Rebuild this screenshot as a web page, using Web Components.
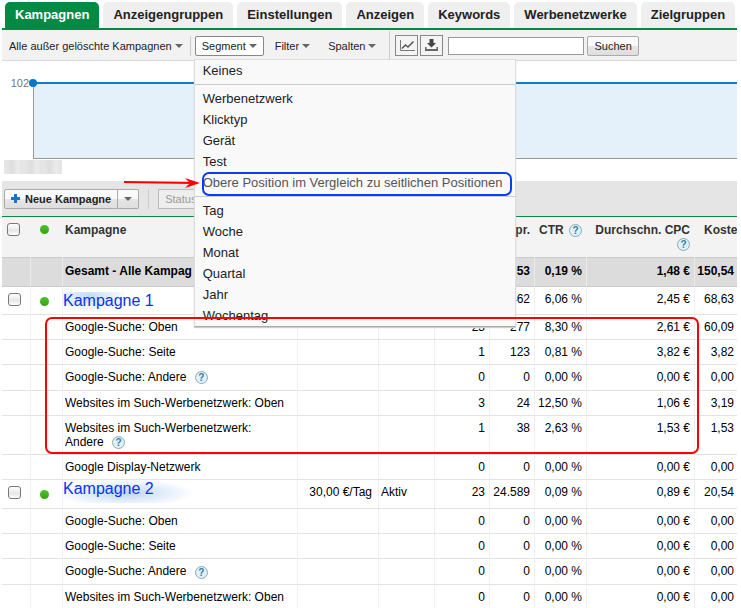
<!DOCTYPE html>
<html lang="de">
<head>
<meta charset="utf-8">
<title>Kampagnen</title>
<style>
  html {
    overflow: hidden;
  }
  body {
    margin: 0;
    padding: 2px 4px 0 2px;
    background: #fff;
    color: #000;
    font-family: "Liberation Sans", Arial, Helvetica, sans-serif;
    font-size: 12px;
  }
</style>
</head>
<body>
<tab-bar>
  <tab-item active>Kampagnen</tab-item>
  <tab-item>Anzeigengruppen</tab-item>
  <tab-item>Einstellungen</tab-item>
  <tab-item>Anzeigen</tab-item>
  <tab-item>Keywords</tab-item>
  <tab-item>Werbenetzwerke</tab-item>
  <tab-item>Zielgruppen</tab-item>
</tab-bar>
<tool-bar>
  <segment-menu slot="menu"></segment-menu>
</tool-bar>
<click-chart>102</click-chart>
<action-bar></action-bar>
<campaign-table></campaign-table>

<script>
class TabBar extends HTMLElement {
    constructor() {
        super()
        this.shadowDOM = this.attachShadow({mode: 'open'})
        this.shadowDOM.innerHTML = `
      <style>
        :host {
            display: block;
            border-bottom: 2px solid #008a43;
        }
        nav {
            display: flex;
            gap: 4px;
            padding-left: 3px;
        }
      </style>
      <nav><slot></slot></nav>
`
    }
}

class TabItem extends HTMLElement {
    constructor() {
        super()
        this.shadowDOM = this.attachShadow({mode: 'open'})
        this.shadowDOM.innerHTML = `
      <style>
        :host {
            display: block;
            background: #efefef;
            border-radius: 5px 5px 0 0;
        }
        a {
            display: block;
            padding: 0 10px;
            color: #222;
            font-size: 13px;
            font-weight: bold;
            line-height: 26px;
            text-decoration: none;
            white-space: nowrap;
        }
        :host([active]) {
            background: #008a43;
        }
        :host([active]) a {
            color: #fff;
        }
      </style>
      <a href="#"><slot></slot></a>
`
    }
}

class ToolBar extends HTMLElement {
    constructor() {
        super()
        this.shadowDOM = this.attachShadow({mode: 'open'})
        this.shadowDOM.innerHTML = `
      <style>
        * {
            box-sizing: border-box;
        }
        :host {
            display: flex;
            align-items: center;
            height: 31px;
            padding-top: 1px;
            box-sizing: border-box;
            background: #f2f2f2;
            border-bottom: 1px solid #d8d8d8;
        }
        button {
            display: flex;
            align-items: center;
            gap: 3px;
            height: 20px;
            margin: 0;
            padding: 0 6px;
            border: 1px solid transparent;
            background: none;
            color: #222;
            font: 11px "Liberation Sans", Arial, sans-serif;
            white-space: nowrap;
        }
        .arrow::after {
            content: "";
            border: 4px solid transparent;
            border-top-color: #666;
            border-bottom: 0;
        }
        .segment {
            position: relative;
            margin: 0 4px;
        }
        .segment > button {
            border-color: #888;
            border-radius: 2px;
            background: #fff;
        }
        .line {
            width: 1px;
            height: 20px;
            background: #ccc;
        }
        .line.tall {
            height: 29px;
            margin: 0 5px 0 6px;
        }
        .filter {
            margin-right: 4px;
        }
        .icon {
            justify-content: center;
            width: 23px;
            height: 21px;
            margin-right: 2px;
            padding: 0;
            border-color: #888;
            background: #f4f4f4;
        }
        input {
            width: 136px;
            height: 18px;
            margin: 0 3px;
            padding: 0 3px;
            border: 1px solid #999;
            background: #fff;
            font-size: 11px;
        }
        .search {
            border-color: #aaa;
            border-radius: 2px;
            background: linear-gradient(#fafafa 50%, #e6e6e6 50%, #dedede);
        }
      </style>
      <button class="arrow">Alle außer gelöschte Kampagnen</button>
      <span class="line"></span>
      <div class="segment">
        <button class="arrow">Segment</button>
        <slot name="menu"></slot>
      </div>
      <button class="arrow filter">Filter</button>
      <button class="arrow">Spalten</button>
      <span class="line tall"></span>
      <button class="icon" aria-label="Diagramm">
        <svg width="16" height="13" viewBox="0 0 16 13" fill="none">
          <path d="M1.500 1v10.500H16" stroke="#777"/>
          <path d="M3 9.500L6.500 6L9 8L14.500 2.500" stroke="#555" stroke-width="1.500"/>
        </svg>
      </button>
      <button class="icon" aria-label="Herunterladen">
        <svg width="15" height="13" viewBox="0 0 15 13">
          <path d="M5.500 0h4v4h2.500L7.500 8.500L3 4h2.500z" fill="#444"/>
          <path d="M1 8v4h13V8h-1.500v2h-10V8z" fill="#666"/>
        </svg>
      </button>
      <input type="text" aria-label="Suche">
      <button class="search">Suchen</button>
`
    }
}

class SegmentMenu extends HTMLElement {
    constructor() {
        super()
        this.shadowDOM = this.attachShadow({mode: 'open'})
    }

    connectedCallback() {
        this.groups = [
            ['Keines'],
            ['Werbenetzwerk', 'Klicktyp', 'Gerät', 'Test', 'Obere Position im Vergleich zu seitlichen Positionen'],
            ['Tag', 'Woche', 'Monat', 'Quartal', 'Jahr', 'Wochentag']
        ]
        this.render()
    }

    render() {
        this.shadowDOM.innerHTML = `
      <style>
        :host {
            position: absolute;
            z-index: 10;
            top: 23px;
            left: -1px;
            box-sizing: border-box;
            width: 322px;
            border: 1px solid #ddd;
            border-bottom-color: #aaa;
            background: #f9f9f9;
            box-shadow: 0 1px 1px #ccc;
        }
        ul {
            margin: 0;
            padding: 3px 0;
            list-style: none;
        }
        ul:first-of-type {
            padding-top: 0;
        }
        ul:last-of-type {
            padding-bottom: 0;
        }
        ul + ul {
            border-top: 1px solid #ccc;
        }
        li {
            padding-left: 8px;
            color: #222;
            font-size: 13px;
            line-height: 21px;
            white-space: nowrap;
        }
        .marked {
            position: relative;
            color: #555;
        }
        .marked::after {
            content: "";
            position: absolute;
            inset: 0 3px -3px 7px;
            border: 2px solid #0a3cf5;
            border-radius: 7px;
        }
        svg {
            position: absolute;
            top: 5px;
            left: -71px;
        }
      </style>
      ${this.groups.map(items => `<ul>${items.map(item => this.item(item)).join('')}</ul>`).join('')}
`
    }

    item(text) {
        if (!text.startsWith('Obere')) {
            return `<li>${text}</li>`
        }
        return `<li class="marked">${text}
          <svg width="77" height="12" viewBox="0 0 77 12">
            <path d="M0 5L70 6" stroke="#f00" stroke-width="2"/>
            <path d="M76 6L61 1L66 6L61 11z" fill="#f00"/>
          </svg></li>`
    }
}

class ClickChart extends HTMLElement {
    constructor() {
        super()
        this.shadowDOM = this.attachShadow({mode: 'open'})
        this.shadowDOM.innerHTML = `
      <style>
        :host {
            display: grid;
            grid-template-columns: 27px 1fr;
            column-gap: 4px;
            padding: 21px 0 7px;
        }
        .label {
            color: #777;
            font-size: 11px;
            line-height: 2px;
            text-align: right;
        }
        .plot {
            position: relative;
            height: 74px;
            border-top: 2px solid #1579cb;
            border-left: 1px solid #999;
            border-bottom: 1px solid #999;
            background: #e4f1fa;
        }
        .plot::before {
            content: "";
            position: absolute;
            top: -5px;
            left: -5px;
            width: 8px;
            height: 8px;
            border-radius: 4px;
            background: #0b73cc;
        }
        .date {
            grid-column: 1 / -1;
            width: 58px;
            height: 14px;
            margin: 1px 0 0 2px;
            background: repeating-linear-gradient(90deg, #e8e8e8 0, #dedede 8px, #ebebeb 14px, #e2e2e2 19px);
        }
      </style>
      <div class="label"><slot></slot></div>
      <div class="plot"></div>
      <div class="date"></div>
`
    }
}

class ActionBar extends HTMLElement {
    constructor() {
        super()
        this.shadowDOM = this.attachShadow({mode: 'open'})
        this.shadowDOM.innerHTML = `
      <style>
        :host {
            display: flex;
            align-items: center;
            gap: 9px;
            height: 35px;
            padding-left: 2px;
            background: #e5e5e5;
            border-bottom: 1px solid #0b8a43;
        }
        .split {
            display: flex;
        }
        button {
            display: flex;
            align-items: center;
            box-sizing: border-box;
            height: 20px;
            margin: 0;
            padding: 0 6px;
            border: 1px solid #aaa;
            background: linear-gradient(#fafafa 50%, #e6e6e6 50%, #dedede);
            color: #222;
            font: bold 11px "Liberation Sans", Arial, sans-serif;
        }
        .new {
            gap: 5px;
            border-radius: 2px 0 0 2px;
        }
        .more {
            border-left: 0;
            border-radius: 0 2px 2px 0;
        }
        .more::after {
            content: "";
            border: 4px solid transparent;
            border-top-color: #666;
            border-bottom: 0;
        }
        .line {
            width: 1px;
            height: 20px;
            background: #ccc;
        }
        .status {
            width: 90px;
            background: #eee;
            border-color: #bbb;
            color: #999;
            font-weight: normal;
        }
      </style>
      <div class="split">
        <button class="new">
          <svg width="9" height="9" viewBox="0 0 9 9"><path d="M3 0h3v3h3v3H6v3H3V6H0V3h3z" fill="#1a73c9"/></svg>
          Neue Kampagne
        </button>
        <button class="more" aria-label="Weitere"></button>
      </div>
      <span class="line"></span>
      <button class="status" disabled>Status</button>
`
    }
}

class HelpIcon extends HTMLElement {
    constructor() {
        super()
        this.shadowDOM = this.attachShadow({mode: 'open'})
        this.shadowDOM.innerHTML = `
      <style>
        :host {
            display: inline-block;
            vertical-align: middle;
            margin-left: 2px;
        }
        button {
            display: block;
            box-sizing: border-box;
            width: 13px;
            height: 13px;
            padding: 0;
            border: 1px solid #8aacb4;
            border-radius: 7px;
            background: #dff0f7;
            color: #3a7ca8;
            font: bold 10px/11px "Liberation Sans", Arial, sans-serif;
            text-align: center;
        }
      </style>
      <button>?</button>
`
    }
}

class CampaignTable extends HTMLElement {
    constructor() {
        super()
        this.shadowDOM = this.attachShadow({mode: 'open'})
    }

    connectedCallback() {
        const help = ' <help-icon></help-icon>'
        // name, budget, status, clicks, impressions, ctr, cpc, cost
        this.rows = [
            {css: 'campaign first', cells: ['Kampagne 1', '', '', '28', '462', '6,06 %', '2,45 €', '68,63']},
            {cells: ['Google-Suche: Oben', '', '', '23', '277', '8,30 %', '2,61 €', '60,09']},
            {cells: ['Google-Suche: Seite', '', '', '1', '123', '0,81 %', '3,82 €', '3,82']},
            {css: 'help', cells: ['Google-Suche: Andere' + help, '', '', '0', '0', '0,00 %', '0,00 €', '0,00']},
            {cells: ['Websites im Such-Werbenetzwerk: Oben', '', '', '3', '24', '12,50 %', '1,06 €', '3,19']},
            {cells: ['Websites im Such-Werbenetzwerk:<br>Andere' + help, '', '', '1', '38', '2,63 %', '1,53 €', '1,53']},
            {cells: ['Google Display-Netzwerk', '', '', '0', '0', '0,00 %', '0,00 €', '0,00']},
            {css: 'campaign second', cells: ['Kampagne 2', '30,00 €/Tag', 'Aktiv', '23', '24.589', '0,09 %', '0,89 €', '20,54']},
            {cells: ['Google-Suche: Oben', '', '', '0', '0', '0,00 %', '0,00 €', '0,00']},
            {cells: ['Google-Suche: Seite', '', '', '0', '0', '0,00 %', '0,00 €', '0,00']},
            {css: 'help', cells: ['Google-Suche: Andere' + help, '', '', '0', '0', '0,00 %', '0,00 €', '0,00']},
            {cells: ['Websites im Such-Werbenetzwerk: Oben', '', '', '0', '0', '0,00 %', '0,00 €', '0,00']}
        ]
        this.render()
    }

    render() {
        this.shadowDOM.innerHTML = `
      <style>
        :host {
            display: block;
            position: relative;
        }
        table {
            width: 100%;
            table-layout: fixed;
            border-collapse: separate;
            border-spacing: 0;
            font-size: 12px;
            line-height: 14px;
        }
        th, td {
            box-sizing: border-box;
            height: 25px;
            padding: 5px 4px 5px 0;
            border-right: 1px solid #efefef;
            border-bottom: 1px solid #e3e3e3;
            text-align: right;
            vertical-align: top;
            white-space: nowrap;
        }
        th:last-child, td:last-child {
            padding-right: 3px;
            border-right: 0;
            overflow: hidden;
        }
        .name, .state {
            padding-left: 2px;
            text-align: left;
        }
        .name help-icon {
            margin-left: 5px;
        }
        .budget {
            padding-right: 6px;
        }
        th {
            height: 41px;
            padding-top: 6px;
            border-right-color: #f3f3f3;
            border-bottom-color: #ccc;
            background: #f3f3f3;
            color: #333;
            white-space: normal;
        }
        th:last-child {
            text-align: left;
            padding-left: 9px;
        }
        .total td {
            height: 29px;
            padding-top: 6px;
            border-right-color: #ececec;
            border-bottom-color: #ccc;
            background: #dcdcdc;
            font-weight: bold;
        }
        .help td {
            height: 26px;
        }
        .first td {
            height: 28px;
        }
        .second td {
            height: 29px;
        }
        .check, .dot {
            text-align: left;
        }
        .check {
            padding-left: 5px;
        }
        .dot {
            padding-left: 9px;
        }
        input {
            display: block;
            appearance: none;
            box-sizing: border-box;
            width: 13px;
            height: 13px;
            margin: 0;
            border: 1px solid #777;
            border-radius: 3px;
            background: linear-gradient(#fff, #e6e6e6 60%, #fff);
        }
        .campaign .check {
            padding-top: 6px;
            padding-left: 6px;
        }
        .dot i {
            display: block;
            width: 9px;
            height: 9px;
            margin-top: 2px;
            border-radius: 5px;
            background: linear-gradient(#4cc22e, #35a313);
        }
        .campaign .dot i {
            margin-top: 5px;
        }
        .campaign .name {
            padding: 0;
        }
        .first .name {
            vertical-align: middle;
        }
        a {
            display: inline-block;
            color: #0a32f5;
            font-size: 16px;
            line-height: 18px;
            text-decoration: none;
        }
        .first a {
            background: radial-gradient(ellipse 40px 16px at 26px 4px, #c4dcf4, transparent);
        }
        .second a {
            padding: 0 42px 5px 0;
            background: radial-gradient(ellipse 70px 14px at 62px 13px, #bcd6f2, transparent);
        }
        .frame {
            position: absolute;
            z-index: 20;
            top: 100px;
            right: 38px;
            left: 43px;
            box-sizing: border-box;
            height: 137px;
            border: 2px solid #f00;
            border-radius: 7px;
            pointer-events: none;
        }
      </style>
      <table>
        <colgroup>
          <col style="width: 29px"><col style="width: 32px"><col>
          <col style="width: 81px"><col style="width: 56px"><col style="width: 55px"><col style="width: 45px">
          <col style="width: 52px"><col style="width: 108px"><col style="width: 42px">
        </colgroup>
        <thead>
          <tr>
            <th class="check"><input type="checkbox" aria-label="Alle auswählen"></th>
            <th class="dot"><i></i></th>
            <th class="name">Kampagne</th>
            <th></th>
            <th></th>
            <th></th>
            <th>Impr.</th>
            <th>CTR <help-icon></help-icon></th>
            <th>Durchschn. CPC <help-icon></help-icon></th>
            <th>Koste</th>
          </tr>
        </thead>
        <tbody>
          <tr class="total">
            <td></td><td></td><td class="name">Gesamt - Alle Kampag</td>
            <td></td><td></td><td></td><td>53</td><td>0,19 %</td><td>1,48 €</td><td>150,54</td>
          </tr>
          ${this.rows.map(row => this.row(row)).join('')}
        </tbody>
      </table>
      <div class="frame"></div>
`
    }

    row({css = '', cells}) {
        const [name, budget, state, ...numbers] = cells
        const campaign = css.startsWith('campaign')
        return `
          <tr class="${css}">
            <td class="check">${campaign ? `<input type="checkbox" aria-label="${name}">` : ''}</td>
            <td class="dot">${campaign ? '<i></i>' : ''}</td>
            <td class="name">${campaign ? `<a href="#">${name}</a>` : name}</td>
            <td class="budget">${budget}</td>
            <td class="state">${state}</td>
            ${numbers.map(n => `<td>${n}</td>`).join('')}
          </tr>`
    }
}

customElements.define('tab-bar', TabBar)
customElements.define('tab-item', TabItem)
customElements.define('tool-bar', ToolBar)
customElements.define('segment-menu', SegmentMenu)
customElements.define('click-chart', ClickChart)
customElements.define('action-bar', ActionBar)
customElements.define('help-icon', HelpIcon)
customElements.define('campaign-table', CampaignTable)
</script>
</body>
</html>
